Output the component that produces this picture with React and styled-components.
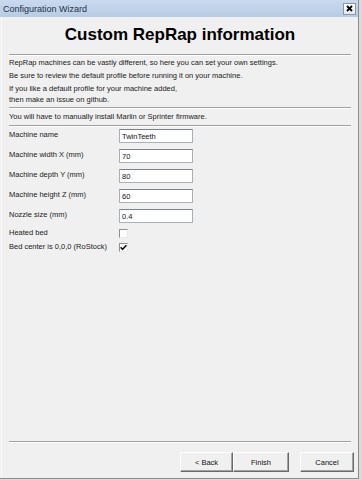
import React from 'react'
import styled, { createGlobalStyle } from 'styled-components'

const GlobalStyle = createGlobalStyle`
  html, body {
    margin: 0;
    padding: 0;
    background: #f0f0f0;
  }
  body {
    font-family: "Liberation Sans", Arial, sans-serif;
    font-size: 7.5px;
    color: #1a1a1a;
  }
`

const Frame = styled.div`
  width: 362px;
  height: 480px;
  box-sizing: border-box;
  padding: 0 3px 1px 0;
  background: #dadada;
`

const Window = styled.div`
  height: 100%;
  box-sizing: border-box;
  display: flex;
  flex-direction: column;
  background: #f0f0f0;
  border-right: 1px solid #8c8c8c;
  border-bottom: 1px solid #8c8c8c;
`

const TitleBar = styled.div`
  height: 17px;
  flex: none;
  display: flex;
  align-items: center;
  justify-content: space-between;
  padding: 0 2px 0 3px;
  background: linear-gradient(#c9daee, #b7cbe3);
  font-size: 9px;
  color: #1e3148;
`

const CloseButton = styled.div`
  width: 11px;
  height: 10px;
  border: 1px solid #8a97a8;
  background: linear-gradient(#ffffff, #e4e8ee);
  display: flex;
  align-items: center;
  justify-content: center;
`

const Body = styled.div`
  flex: 1;
  display: flex;
  flex-direction: column;
  padding: 7px 7px 0 7px;
  margin-left: 1px;
  border-left: 1px solid #fbfbfb;
`

const Heading = styled.h1`
  margin: 0;
  font-size: 17px;
  font-weight: bold;
  text-align: center;
  color: #000;
  line-height: 22px;
`

const Separator = styled.div`
  height: 0;
  flex: none;
  border-top: 1px solid #a0a0a0;
  border-bottom: 1px solid #ffffff;
  margin: ${p => p.$m};
`

const Line = styled.p`
  margin: ${p => p.$top || 0}px 0 0 0;
  line-height: 9px;
`

const Form = styled.div`
  display: flex;
  flex-direction: column;
  margin-top: 2px;
`

const Row = styled.div`
  display: flex;
  align-items: center;
  margin-bottom: ${p => p.$gap}px;
`

const Label = styled.span`
  width: 110px;
  flex: none;
  line-height: 9px;
  margin-top: -3px;
`

const Input = styled.div`
  width: 74px;
  height: 14px;
  box-sizing: border-box;
  border: 1px solid #abb0b8;
  border-top-color: #7d838c;
  background: #fff;
  padding: 2px 0 0 2px;
  line-height: 9px;
  color: #111;
`

const Check = styled.div`
  width: 9px;
  height: 9px;
  box-sizing: border-box;
  border: 1px solid #8f8f8f;
  border-right-color: #e8e8e8;
  border-bottom-color: #e8e8e8;
  background: #fff;
  display: flex;
  align-items: center;
  justify-content: center;
`

const Spacer = styled.div`
  flex: 1;
`

const Buttons = styled.div`
  display: flex;
  justify-content: flex-end;
  padding: 9px 0 6px 0;
  margin-right: -3px;
`

const Button = styled.div`
  width: ${p => p.$w}px;
  height: 20px;
  box-sizing: border-box;
  margin-left: ${p => p.$ml || 0}px;
  border: 1px solid #ffffff;
  border-right-color: #6a6a6a;
  border-bottom-color: #6a6a6a;
  box-shadow: inset -1px -1px 0 #a3a3a3;
  background: #f0f0f0;
  display: flex;
  align-items: center;
  justify-content: center;
  color: #111;
`

const fields = [
  ['Machine name', 'TwinTeeth'],
  ['Machine width X (mm)', '70'],
  ['Machine depth Y (mm)', '80'],
  ['Machine height Z (mm)', '60'],
  ['Nozzle size (mm)', '0.4'],
]

const Tick = () => (
  <svg width="7" height="7" viewBox="0 0 7 7">
    <path d="M0.6 3.3 L2.6 5.3 L6.4 1.3" stroke="#111" strokeWidth="1.6" fill="none" />
  </svg>
)

export default function App() {
  return (
    <>
      <GlobalStyle />
      <Frame>
        <Window>
          <TitleBar>
            <span>Configuration Wizard</span>
            <CloseButton>
              <svg width="7" height="7" viewBox="0 0 7 7">
                <path d="M1 1 L6 6 M6 1 L1 6" stroke="#000" strokeWidth="1.8" />
              </svg>
            </CloseButton>
          </TitleBar>
          <Body>
            <Heading>Custom RepRap information</Heading>
            <Separator $m="8px 0 0 0" />
            <Line $top={2}>RepRap machines can be vastly different, so here you can set your own settings.</Line>
            <Line $top={4}>Be sure to review the default profile before running it on your machine.</Line>
            <Line $top={4}>If you like a default profile for your machine added,</Line>
            <Line $top={2}>then make an issue on github.</Line>
            <Separator $m="3px 0 0 0" />
            <Line $top={3}>You will have to manually install Marlin or Sprinter firmware.</Line>
            <Separator $m="4px 0 0 0" />
            <Form>
              {fields.map(([label, value]) => (
                <Row key={label} $gap={6}>
                  <Label>{label}</Label>
                  <Input>{value}</Input>
                </Row>
              ))}
              <Row $gap={5}>
                <Label>Heated bed</Label>
                <Check />
              </Row>
              <Row $gap={0}>
                <Label>Bed center is 0,0,0 (RoStock)</Label>
                <Check><Tick /></Check>
              </Row>
            </Form>
            <Spacer />
            <Separator $m="0" />
            <Buttons>
              <Button $w={53}>&lt; Back</Button>
              <Button $w={56}>Finish</Button>
              <Button $w={54} $ml={11}>Cancel</Button>
            </Buttons>
          </Body>
        </Window>
      </Frame>
    </>
  )
}
